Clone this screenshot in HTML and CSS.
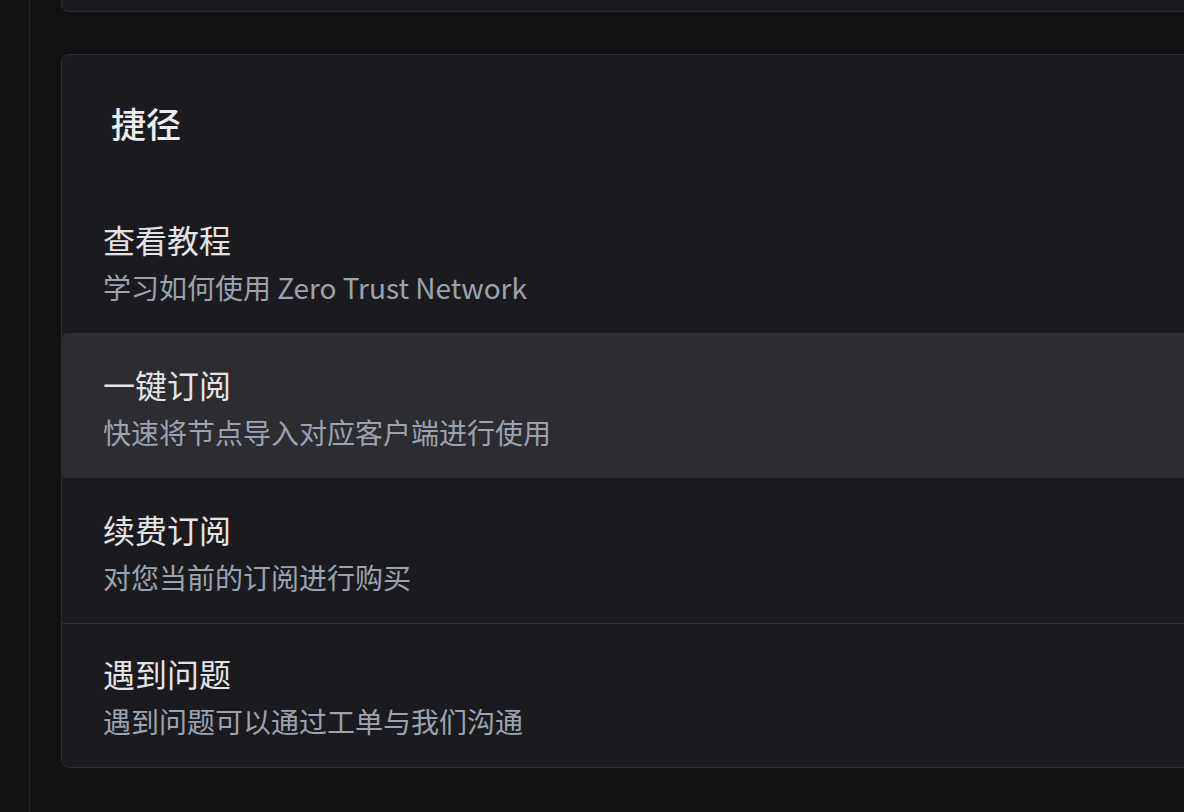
FILE: index.html
```html
<!DOCTYPE html>
<html lang="zh-CN">
<head>
<meta charset="utf-8">
<title>捷径</title>
<link rel="stylesheet" href="styles.css">
</head>
<body>
<div class="layout">
  <aside class="sidebar"></aside>
  <main class="main">
    <section class="card card-prev"></section>
    <section class="card shortcuts">
      <h2 class="card-title">捷径</h2>
      <ul class="shortcut-list">
        <li class="shortcut">
          <div class="shortcut-name">查看教程</div>
          <div class="shortcut-desc">学习如何使用 Zero Trust Network</div>
        </li>
        <li class="shortcut is-hover">
          <div class="shortcut-name">一键订阅</div>
          <div class="shortcut-desc">快速将节点导入对应客户端进行使用</div>
        </li>
        <li class="shortcut">
          <div class="shortcut-name">续费订阅</div>
          <div class="shortcut-desc">对您当前的订阅进行购买</div>
        </li>
        <li class="shortcut has-divider">
          <div class="shortcut-name">遇到问题</div>
          <div class="shortcut-desc">遇到问题可以通过工单与我们沟通</div>
        </li>
      </ul>
    </section>
  </main>
</div>
</body>
</html>
```

FILE: styles.css
```css
html, body {
  margin: 0;
  padding: 0;
  height: 100%;
  background: #121212;
  overflow: hidden;
  font-family: "Noto Sans CJK SC", "Noto Sans", sans-serif;
}

.layout {
  display: flex;
  height: 812px;
}

.sidebar {
  flex: 0 0 29px;
  background: #141414;
  border-right: 1px solid #262628;
}

.main {
  flex: 0 0 auto;
  width: 1240px;
  padding-left: 31px;
  margin-top: -88px;
  display: flex;
  flex-direction: column;
  gap: 42px;
}

.card {
  background: #1b1b1f;
  border: 1px solid #2c2c31;
  border-radius: 8px;
  box-sizing: border-box;
}

.card-prev {
  height: 100px;
}

.card-title {
  margin: 0;
  padding: 48px 48px 45px 49px;
  font-size: 35px;
  line-height: 40px;
  font-weight: 500;
  color: #ececec;
}

.shortcut-list {
  list-style: none;
  margin: 0;
  padding: 0;
}

.shortcut {
  padding: 27px 41px 0;
  height: 145px;
  box-sizing: border-box;
}

.shortcut.is-hover {
  background: #2c2c31;
  border-radius: 5px;
}

.shortcut.has-divider {
  border-top: 1px solid #2f2f34;
  padding-top: 25px;
  height: 144px;
}

.shortcut-name {
  font-size: 32px;
  line-height: 48px;
  color: #e4e4e6;
}

.shortcut-desc {
  font-size: 28px;
  line-height: 48px;
  color: #9ca3af;
}
```
